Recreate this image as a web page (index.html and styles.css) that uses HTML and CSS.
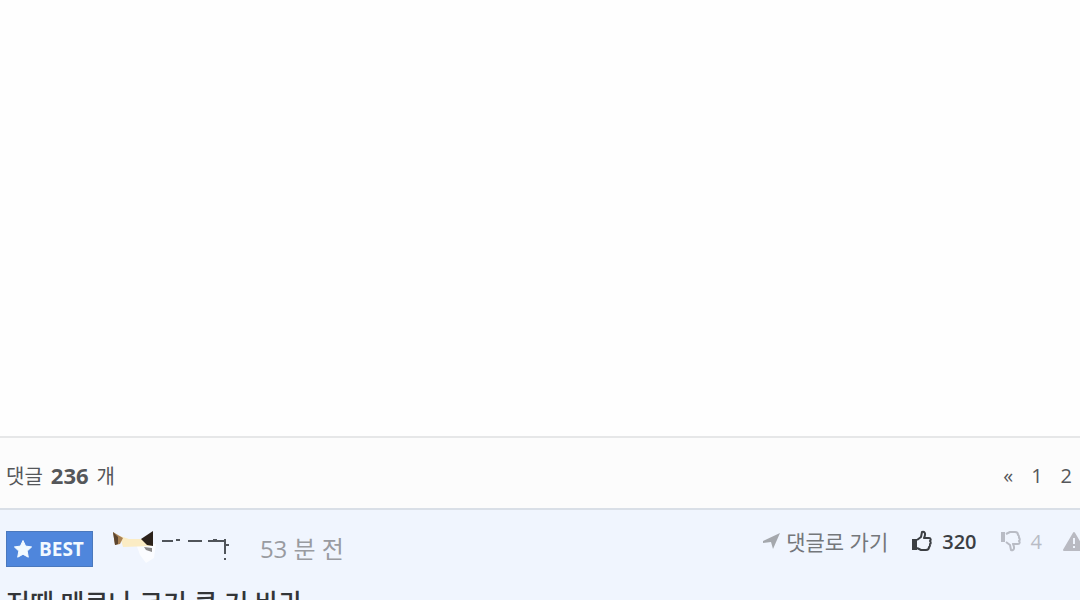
FILE: index.html
```html
<!doctype html>
<html lang="ko">
  <head>
    <meta charset="UTF-8" />
    <meta name="viewport" content="width=device-width, initial-scale=1.0" />
    <title>댓글</title>
    <link rel="stylesheet" href="styles.css">
  </head>
  <body>
    <main class="article-body"></main>
    <section class="comments">
      <header class="comments-header">
        <h2 class="comments-count"><span>댓글</span> <strong>236</strong> <span>개</span></h2>
        <nav class="pagination" aria-label="댓글 페이지">
          <a href="#first">«</a>
          <a href="#page-1">1</a>
          <a href="#page-2">2</a>
        </nav>
      </header>
      <article class="comment">
        <div class="comment-meta">
          <span class="best-badge">
            <svg width="20" height="20" viewBox="0 0 20 20" aria-hidden="true">
              <path fill="currentColor" stroke="currentColor" stroke-linejoin="round" d="M10 1.5l2.6 5.6 6 .8-4.4 4.2 1.1 6.1L10 15.3l-5.3 2.9 1.1-6.1L1.4 7.9l6-.8z" />
            </svg>
            BEST
          </span>
          <!-- level icon and the erased nickname -->
          <svg class="author" width="118" height="34" viewBox="0 0 118 34" role="img" aria-label="작성자">
            <path fill="#fff" d="M24 14h20l-2 14-8 5-6-8z" opacity=".7" />
            <path fill="#fbecc4" d="M8 6l9 3h13l8-4 1 11-28 1z" />
            <path fill="#aa8254" d="M1 2l10 6-3 6-5 1z" />
            <path fill="#5c452f" d="M1 2l5 5v7l-3 1z" />
            <path fill="#2b211a" d="M41 1v15l-6-1-6-6z" />
            <path fill="#8a8888" d="M32 17l8 1v4l-6-2z" />
            <path fill="none" stroke="#50545a" stroke-width="2" d="M50 11h11M64 10h4M76 11h14M96 11h16M101 10h4" />
            <path fill="none" stroke="#50545a" stroke-width="2" d="M113 9v15M113 15h4M113 28v2" />
          </svg>
          <time class="comment-time">53 분 전</time>
          <div class="comment-actions">
            <a class="goto" href="#comment">
              <svg width="18" height="18" viewBox="0 0 18 18" aria-hidden="true">
                <path fill="#a5a8ad" d="M18 1l-7 16-2-7-8 1v-2z" />
              </svg>
              댓글로 가기
            </a>
            <button class="vote vote-up" type="button">
              <svg width="20" height="22" viewBox="0 0 20 22" aria-hidden="true">
                <path fill="currentColor" d="M0 9h5v11H0z" />
                <path fill="none" stroke="currentColor" stroke-width="2" stroke-linejoin="round" d="M5 10l4-3 1-5c3-1 4 2 2 6h5c2 0 2 2 1 3 1 1 1 3 0 3 0 2 0 3-1 3 0 2-1 3-3 3H9l-4-2" />
              </svg>
              320
            </button>
            <button class="vote vote-down" type="button">
              <svg width="20" height="22" viewBox="0 0 20 22" aria-hidden="true">
                <path fill="currentColor" d="M0 2h4v10H0z" />
                <path fill="none" stroke="currentColor" stroke-width="2" stroke-linejoin="round" d="M5 12l4 3 1 5c3 1 4-2 2-6h5c2 0 2-2 1-3 1-1 1-3 0-3 0-2 0-3-1-3 0-2-1-3-3-3H9L5 4" />
              </svg>
              4
            </button>
            <button class="report" type="button" aria-label="신고">
              <svg width="24" height="20" viewBox="0 0 24 20" aria-hidden="true">
                <path fill="#b9bac2" stroke="#b9bac2" stroke-width="2" stroke-linejoin="round" d="M12 2l10 17H2z" />
                <path stroke="#eff4fd" stroke-width="2" d="M12 7v6M12 15v2" />
              </svg>
            </button>
          </div>
        </div>
        <p class="comment-text">저때 메로나 크기 큰 거 바라</p>
      </article>
    </section>
  </body>
</html>
```

FILE: styles.css
```css
* {
  box-sizing: border-box;
}

body {
  margin: 0;
  font-family: "Open Sans", "Noto Sans CJK KR", sans-serif;
  font-size: 20px;
  color: #55575a;
  background-color: #fefefe;
}

a {
  color: inherit;
  text-decoration: none;
}

button {
  padding: 0;
  border: none;
  background: none;
  font: inherit;
  cursor: pointer;
}

.article-body {
  min-height: 436px;
}

.comments {
  overflow: hidden;
  border-top: 2px solid #e6e7e8;
}

.comments-header {
  display: flex;
  align-items: center;
  justify-content: space-between;
  height: 72px;
  padding: 4px 8px 0 6px;
  background-color: #fcfcfc;
  border-bottom: 2px solid #d9dfe7;
}

.comments-count {
  display: flex;
  align-items: baseline;
  gap: 8px;
  margin: 0;
  font-size: 20px;
  font-weight: 400;
}

.comments-count strong {
  font-size: 22px;
}

.pagination {
  display: flex;
  gap: 18px;
  font-weight: 500;
}

.comment {
  padding: 14px 6px;
  background-color: #f0f5fe;
}

.comment-meta {
  display: flex;
  align-items: center;
  height: 46px;
}

.best-badge {
  display: flex;
  align-items: center;
  gap: 6px;
  height: 36px;
  padding: 0 8px 0 6px;
  margin-top: 4px;
  border: 1px solid #4a78bd;
  background-color: #4f86dc;
  color: #f2faff;
  font-size: 19px;
  font-weight: 700;
}

.author {
  flex: none;
  margin-left: 19px;
}

.comment-time {
  margin-left: 30px;
  color: #999ba1;
  font-size: 24px;
}

.comment-actions {
  display: flex;
  align-items: center;
  margin: 0 -12px 12px auto;
}

.goto,
.vote {
  display: flex;
  align-items: center;
  white-space: nowrap;
}

.goto {
  gap: 6px;
  color: #74777b;
  font-size: 21px;
}

.vote {
  gap: 10px;
  margin-left: 24px;
}

.vote-up {
  color: #3b3e43;
  font-weight: 600;
}

.vote-down {
  color: #b9bcc5;
}

.report {
  display: flex;
  margin-left: 20px;
}

.comment-text {
  margin: 15px 0 0;
  color: #333538;
  font-size: 26px;
  font-weight: 500;
  line-height: 36px;
}
```
